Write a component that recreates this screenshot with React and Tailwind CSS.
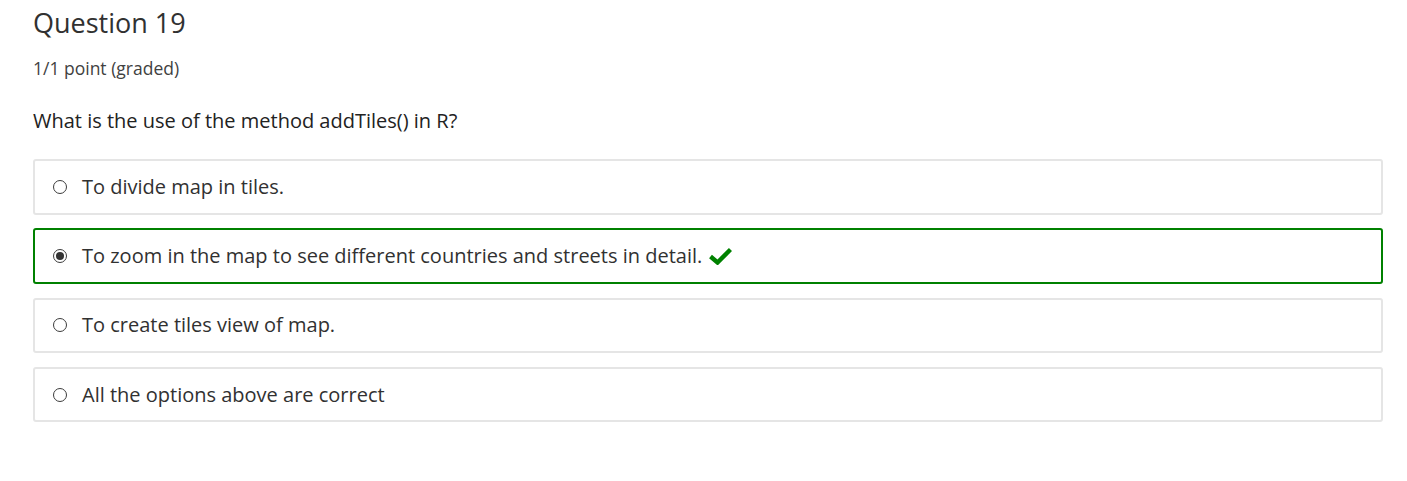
import React from "react";

const options = [
  { text: "To divide map in tiles.", selected: false },
  { text: "To zoom in the map to see different countries and streets in detail.", selected: true },
  { text: "To create tiles view of map.", selected: false },
  { text: "All the options above are correct", selected: false },
];

function Radio({ checked }) {
  return (
    <span className="relative inline-flex h-[14px] w-[14px] shrink-0 items-center justify-center rounded-full border border-[#3c3c3c] bg-white">
      {checked && <span className="h-[8px] w-[8px] rounded-full bg-[#333]" />}
    </span>
  );
}

export default function App() {
  return (
    <div className="bg-white pl-[33px] pr-[24px] pt-[7px] text-[#313131]" style={{ fontFamily: '"Open Sans", sans-serif' }}>
      <h2 className="text-[27px] leading-[32px] font-normal text-[#313131]">Question 19</h2>
      <div className="mt-[19px] text-[17.5px] leading-[20px] text-[#414141]">1/1 point (graded)</div>
      <p className="mt-[30px] text-[20px] leading-[26px] text-[#222]">What is the use of the method addTiles() in R?</p>
      <div className="mt-[25px] flex flex-col gap-[13.8px]">
        {options.map((o, i) => (
          <div
            key={i}
            className={
              "flex h-[55.5px] items-center rounded-[3px] border-2 pl-[18px] " +
              (o.selected ? "border-[#008100]" : "border-[#e5e5e5]")
            }
          >
            <Radio checked={o.selected} />
            <span className="ml-[15px] text-[20px] leading-[26px] text-[#313131]">{o.text}</span>
            {o.selected && (
              <svg className="ml-[7px]" width="23" height="18" viewBox="0 0 23 18">
                <path d="M1.5 9.5 L8.5 15.5 L21.5 2.5" fill="none" stroke="#008100" strokeWidth="4.4" strokeLinejoin="miter" />
              </svg>
            )}
          </div>
        ))}
      </div>
    </div>
  );
}
